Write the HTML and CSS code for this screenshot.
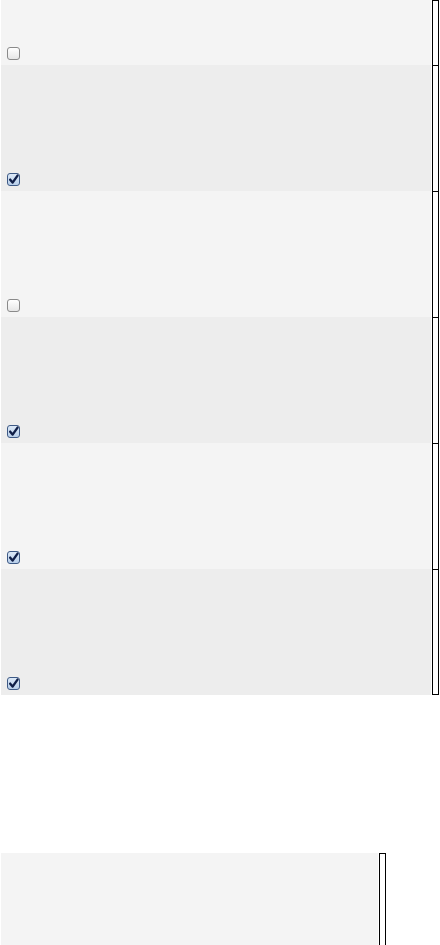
FILE: index.html
```html
<!DOCTYPE html>
<html>
<head>
<meta charset="utf-8">
<link rel="stylesheet" href="styles.css">
</head>
<body>
<div class="list">
  <div class="row row-short light">
    <div class="cell"><span class="cb"></span></div>
    <div class="side"></div>
  </div>
  <div class="row dark">
    <div class="cell"><span class="cb checked"><svg viewBox="0 0 12 12" width="12" height="12"><path d="M2.4 5.6 L5 8.8 L10.4 1.2" fill="none" stroke="#101f48" stroke-width="2.6" stroke-linecap="round" stroke-linejoin="round"/></svg></span></div>
    <div class="side"></div>
  </div>
  <div class="row light">
    <div class="cell"><span class="cb"></span></div>
    <div class="side"></div>
  </div>
  <div class="row dark">
    <div class="cell"><span class="cb checked"><svg viewBox="0 0 12 12" width="12" height="12"><path d="M2.4 5.6 L5 8.8 L10.4 1.2" fill="none" stroke="#101f48" stroke-width="2.6" stroke-linecap="round" stroke-linejoin="round"/></svg></span></div>
    <div class="side"></div>
  </div>
  <div class="row light">
    <div class="cell"><span class="cb checked"><svg viewBox="0 0 12 12" width="12" height="12"><path d="M2.4 5.6 L5 8.8 L10.4 1.2" fill="none" stroke="#101f48" stroke-width="2.6" stroke-linecap="round" stroke-linejoin="round"/></svg></span></div>
    <div class="side"></div>
  </div>
  <div class="row dark last">
    <div class="cell"><span class="cb checked"><svg viewBox="0 0 12 12" width="12" height="12"><path d="M2.4 5.6 L5 8.8 L10.4 1.2" fill="none" stroke="#101f48" stroke-width="2.6" stroke-linecap="round" stroke-linejoin="round"/></svg></span></div>
    <div class="side"></div>
  </div>
</div>
<div class="panel">
  <div class="panel-body"></div>
  <div class="side side-full"></div>
</div>
</body>
</html>
```
FILE: styles.css
```css
html, body {
  margin: 0;
  padding: 0;
  background: #ffffff;
  font-family: "Liberation Sans", Arial, sans-serif;
}
.list {
  display: flex;
  flex-direction: column;
  padding-left: 1px;
  width: 438px;
}
.row {
  display: flex;
  height: 126px;
  gap: 1px;
}
.row-short {
  height: 65px;
}
.cell {
  flex: 1;
  display: flex;
  align-items: flex-end;
  padding: 0 0 5px 6px;
}
.light .cell { background: #f4f4f4; }
.dark .cell { background: #ededed; }
.side {
  width: 5px;
  border: 1px solid #000;
  border-bottom: none;
  background: #ffffff;
}
.last .side {
  border-bottom: 1px solid #000;
}
.cb {
  box-sizing: border-box;
  width: 13px;
  height: 13px;
  border: 1px solid #8a8a8a;
  border-radius: 3px;
  background: linear-gradient(#ffffff, #e6e6e6);
  display: flex;
  align-items: center;
  justify-content: center;
}
.cb.checked {
  border-color: #3e5a86;
  background: linear-gradient(#dbe8f7, #b8cfea);
}
.cb svg {
  display: block;
  width: 12px;
  height: 12px;
}
.panel {
  display: flex;
  margin-top: 158px;
  padding-left: 1px;
  width: 385px;
  gap: 1px;
  height: 120px;
}
.panel-body {
  flex: 1;
  background: #f4f4f4;
}
.side-full {
  border-bottom: 1px solid #000;
}
```
